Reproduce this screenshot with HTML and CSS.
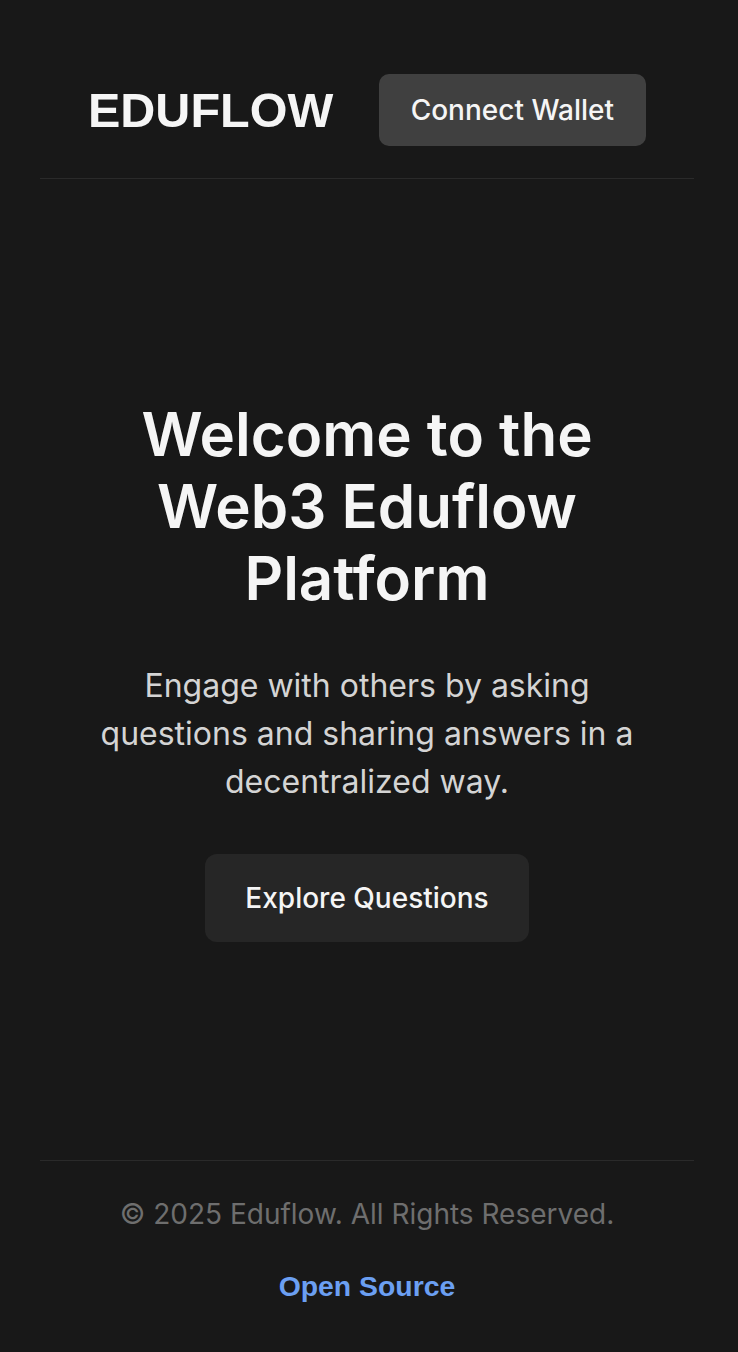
FILE: index.html
```html
<!DOCTYPE html>
<html lang="en">
<head>
<meta charset="utf-8">
<title>Eduflow</title>
<link rel="stylesheet" href="styles.css">
</head>
<body>
<div class="page">
  <header class="header">
    <div class="logo">EDUFLOW</div>
    <button class="btn-wallet">Connect Wallet</button>
  </header>
  <main class="hero">
    <h1 class="hero-title">Welcome to the Web3 Eduflow Platform</h1>
    <p class="hero-text">Engage with others by asking questions and sharing answers in a decentralized way.</p>
    <button class="btn-explore">Explore Questions</button>
  </main>
  <footer class="footer">
    <p class="copyright">© 2025 Eduflow. All Rights Reserved.</p>
    <a class="footer-link" href="#">Open Source</a>
  </footer>
</div>
</body>
</html>
```

FILE: styles.css
```css
* { box-sizing: border-box; }
html, body { margin: 0; padding: 0; }
body {
  background: #181818;
  color: #f5f5f5;
  font-family: Inter, "Noto Sans", sans-serif;
}
.page {
  min-height: 100vh;
  display: flex;
  flex-direction: column;
  padding: 0 44px 0 40px;
}
.header {
  display: flex;
  align-items: center;
  justify-content: space-between;
  padding: 74px 48px 32px 48px;
  border-bottom: 1px solid #2a2a2a;
}
.logo {
  font-family: "Liberation Sans", Arial, sans-serif;
  font-weight: 700;
  font-size: 48.5px;
  line-height: 56px;
  color: #f5f5f5;
}
.btn-wallet {
  font-family: Inter, sans-serif;
  font-size: 28px;
  font-weight: 500;
  line-height: 40px;
  color: #f5f5f5;
  background: #404040;
  border: none;
  border-radius: 10px;
  padding: 16px 32px;
}
.hero {
  flex: 1;
  display: flex;
  flex-direction: column;
  align-items: center;
  justify-content: center;
  text-align: center;
}
.hero-title {
  margin: 0;
  max-width: 560px;
  font-size: 60px;
  line-height: 72px;
  font-weight: 600;
  color: #f5f5f5;
}
.hero-text {
  margin: 48px 0 0;
  max-width: 560px;
  font-size: 32px;
  line-height: 48px;
  font-weight: 400;
  color: #d4d4d4;
}
.btn-explore {
  margin-top: 48px;
  font-family: Inter, sans-serif;
  font-size: 28px;
  font-weight: 500;
  line-height: 40px;
  color: #f5f5f5;
  background: #262626;
  border: none;
  border-radius: 12px;
  padding: 24px 40px;
}
.footer {
  border-top: 1px solid #2a2a2a;
  padding: 33px 0 46px;
  display: flex;
  flex-direction: column;
  align-items: center;
  gap: 32px;
}
.copyright {
  margin: 0;
  font-size: 28px;
  line-height: 40px;
  color: #6e6e6e;
}
.footer-link {
  font-family: "Liberation Sans", Arial, sans-serif;
  font-weight: 700;
  font-size: 28.4px;
  line-height: 40px;
  color: #6b9ff2;
  text-decoration: none;
}
```
